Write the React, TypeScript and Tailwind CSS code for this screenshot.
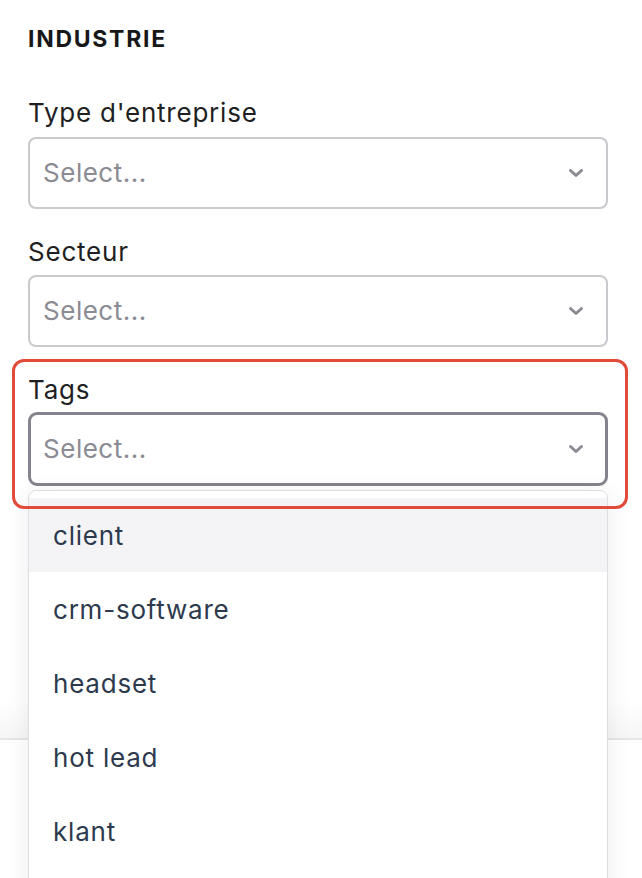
import React from "react";

const Chevron = () => (
  <svg width="16" height="10" viewBox="0 0 16 10" fill="none">
    <path d="M2.5 2.5 L8 7.5 L13.5 2.5" stroke="#8b8b94" strokeWidth="3" strokeLinecap="round" strokeLinejoin="round" />
  </svg>
);

const SelectBox = ({ focused = false }: { focused?: boolean }) => (
  <div
    className={
      focused
        ? "h-[74px] rounded-[9px] border-[3px] border-[#84848e] bg-white flex items-center justify-between pl-[12px] pr-[21px]"
        : "h-[72px] rounded-[8px] border-2 border-[#c9c9ce] bg-white flex items-center justify-between pl-[13px] pr-[22px]"
    }
  >
    <span className="text-[26px] tracking-[0.02em] text-[#8b8b94] leading-none">Select...</span>
    <Chevron />
  </div>
);

const items = ["client", "crm-software", "headset", "hot lead", "klant"];

export default function App() {
  return (
    <div
      className="relative w-[642px] h-[878px] overflow-hidden bg-white flex flex-col"
      style={{ fontFamily: "Inter, 'Noto Sans', sans-serif" }}
    >
      <div className="pl-[28px] pr-[34px] pt-[25px]">
        <h2 className="text-[23px] font-bold tracking-[0.075em] text-[#18181b] leading-[28px]">INDUSTRIE</h2>

        <div className="mt-[43px]">
          <label className="block text-[26px] tracking-[0.03em] text-[#1f1f23] leading-[34px]">Type d'entreprise</label>
          <div className="mt-[7px]">
            <SelectBox />
          </div>
        </div>

        <div className="mt-[26px]">
          <label className="block text-[26px] tracking-[0.03em] text-[#1f1f23] leading-[34px]">Secteur</label>
          <div className="mt-[6px]">
            <SelectBox />
          </div>
        </div>

        <div className="relative mt-[26px]">
          <label className="block text-[26px] tracking-[0.03em] text-[#1f1f23] leading-[34px]">Tags</label>
          <div className="mt-[5px]">
            <SelectBox focused />
          </div>

          <div className="absolute left-0 right-0 top-[117px] z-10 rounded-[8px] border border-[#dedee2] bg-white pt-[7px] shadow-[0_4px_24px_rgba(0,0,0,0.08)]">
            {items.map((it, i) => (
              <div
                key={it}
                className={
                  (i === 0 ? "bg-[#f4f4f6] " : "") +
                  "h-[74px] flex items-center px-[24px] text-[26px] tracking-[0.03em] text-[#2d3a4e]"
                }
              >
                {it}
              </div>
            ))}
            <div className="h-[80px]" />
          </div>

          <div className="absolute left-[-16px] right-[-20px] top-[-14px] bottom-[-23px] z-20 rounded-[12px] border-[3px] border-[#e14b39] pointer-events-none" />
        </div>
      </div>

      <div className="flex-1" />
      <div className="h-[38px] bg-gradient-to-b from-white to-[#f6f6f7]" />
      <div className="h-[140px] border-t-2 border-[#e6e6e8] bg-white" />
    </div>
  );
}
